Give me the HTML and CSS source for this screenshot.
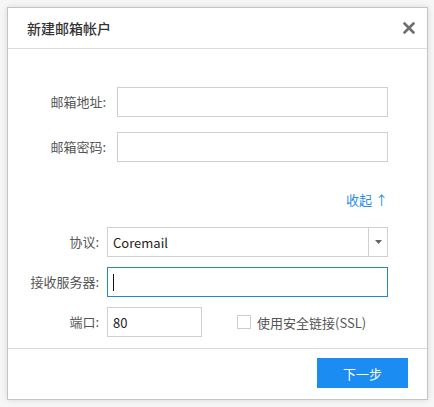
FILE: index.html
```html
<!DOCTYPE html>
<html lang="zh-CN">
<head>
<meta charset="utf-8">
<title>新建邮箱帐户</title>
<link rel="stylesheet" href="styles.css">
</head>
<body>
<div class="dialog">
  <div class="header">
    <span class="title">新建邮箱帐户</span>
    <span class="close">
      <svg width="12" height="12" viewBox="0 0 12 12"><path d="M1.5 1.5 L10.5 10.5 M10.5 1.5 L1.5 10.5" stroke="#6f6f6f" stroke-width="2.6" stroke-linecap="round" fill="none"/></svg>
    </span>
  </div>
  <div class="body">
    <div class="row wide gap15">
      <label class="label">邮箱地址:</label>
      <div class="input"></div>
    </div>
    <div class="row wide">
      <label class="label">邮箱密码:</label>
      <div class="input"></div>
    </div>
    <div class="collapse"><a class="link">收起 ↑</a></div>
    <div class="row narrow gap10">
      <label class="label">协议:</label>
      <div class="input select">
        <span class="value">Coremail</span>
        <span class="drop"><svg width="7" height="4" viewBox="0 0 7 4"><path d="M0 0 H7 L3.5 4 Z" fill="#666"/></svg></span>
      </div>
    </div>
    <div class="row narrow gap10">
      <label class="label">接收服务器:</label>
      <div class="input focus"><span class="caret"></span></div>
    </div>
    <div class="row narrow">
      <label class="label">端口:</label>
      <div class="input port"><span class="value">80</span></div>
      <span class="checkbox"></span>
      <span class="check-text">使用安全链接(SSL)</span>
    </div>
  </div>
  <div class="footer">
    <button class="btn">下一步</button>
  </div>
</div>
</body>
</html>
```

FILE: styles.css
```css
html, body {
  margin: 0;
  padding: 0;
}
body {
  background: #f6f6f6;
  font-family: "Noto Sans CJK SC", "Noto Sans", sans-serif;
  font-size: 13px;
  color: #555;
  padding: 7px;
}
.dialog {
  width: 419px;
  background: #fff;
  border: 1px solid #c4c4c4;
  box-shadow: 0 0 6px rgba(0, 0, 0, 0.12);
}
.header {
  height: 40px;
  border-bottom: 1px solid #dcdcdc;
  display: flex;
  align-items: center;
  justify-content: space-between;
  padding: 0 12px 0 19px;
}
.title {
  font-size: 14px;
  font-weight: 500;
  color: #333;
}
.close {
  display: flex;
  width: 12px;
  height: 12px;
}
.body {
  padding: 38px 39px 11px 0;
}
.row {
  display: flex;
  align-items: center;
  height: 30px;
}
.gap15 { margin-bottom: 15px; }
.gap10 { margin-bottom: 10px; }
.label {
  text-align: right;
  color: #555;
  flex: none;
  line-height: 30px;
  box-sizing: border-box;
  padding-right: 2px;
}
.wide .label {
  width: 100px;
  margin-right: 9px;
}
.narrow .label {
  width: 93px;
  margin-right: 6px;
}
.input {
  flex: 1;
  height: 28px;
  border: 1px solid #cfcfcf;
  background: #fff;
  display: flex;
  align-items: center;
  padding-left: 5px;
  color: #222;
  font-size: 13px;
}
.collapse {
  margin: 30px 0 19px;
  height: 16px;
  line-height: 16px;
  text-align: right;
}
.link {
  color: #2b8de2;
  font-size: 13px;
}
.select {
  padding-left: 0;
}
.select .value {
  flex: 1;
  padding-left: 5px;
}
.drop {
  width: 18px;
  height: 28px;
  border-left: 1px solid #cfcfcf;
  display: flex;
  align-items: center;
  justify-content: center;
}
.focus {
  border-color: #1f86d6;
}
.caret {
  width: 1px;
  height: 17px;
  background: #111;
}
.port {
  flex: none;
  width: 88px;
}
.checkbox {
  width: 12px;
  height: 12px;
  border: 1px solid #cdcdcd;
  margin-left: 35px;
  margin-right: 6px;
  flex: none;
}
.check-text {
  color: #555;
}
.footer {
  border-top: 1px solid #dcdcdc;
  height: 50px;
  display: flex;
  justify-content: flex-end;
  align-items: flex-start;
  padding: 0 19px 0 0;
}
.btn {
  margin-top: 9px;
  width: 91px;
  height: 30px;
  border: none;
  background: #1a8cf2;
  color: #fff;
  font-family: "Noto Sans CJK SC", sans-serif;
  font-size: 13px;
  padding: 0;
}
```
